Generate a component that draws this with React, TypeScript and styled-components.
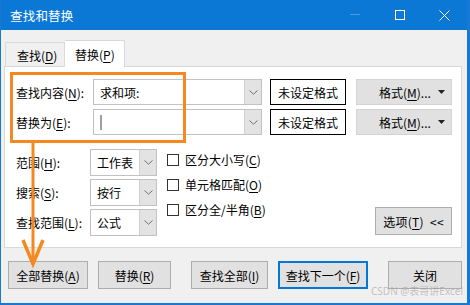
import React from "react";
import styled, { createGlobalStyle } from "styled-components";

const Global = createGlobalStyle`
  html, body { margin: 0; padding: 0; background: #fff; }
  body { font-family: "Noto Sans", "Noto Sans CJK SC", sans-serif; font-size: 12px; color: #000; }
  * { box-sizing: border-box; }
`;

const Window = styled.div`
  position: relative;
  width: 470px;
  height: 305px;
  background: #f0f0f0;
  border-left: 1px solid #1979d2;
  border-right: 3px solid #1979d2;
  border-bottom: 2px solid #1979d2;
  display: flex;
  flex-direction: column;
  overflow: hidden;
`;

const TitleBar = styled.div`
  height: 30px;
  flex: none;
  background: #0b78d6;
  color: #fff;
  display: flex;
  align-items: center;
  padding-left: 9px;
  font-family: "Noto Sans CJK SC", sans-serif;
  font-size: 12.5px;
`;

const Title = styled.div`
  flex: 1;
  letter-spacing: 0.2px;
`;

const Ctrl = styled.div`
  width: 45px;
  height: 30px;
  display: flex;
  align-items: center;
  justify-content: center;
`;

const Body = styled.div`
  flex: 1;
  display: flex;
  flex-direction: column;
  padding: 10px 5px 10px 3px;
`;

const TabRow = styled.div`
  display: flex;
  align-items: flex-end;
  margin-left: 1px;
  height: 27px;
  position: relative;
  z-index: 1;
  margin-bottom: -1px;
`;

const Tab = styled.div<{ $active?: boolean }>`
  width: 60px;
  height: ${(p) => (p.$active ? "27px" : "25px")};
  background: ${(p) => (p.$active ? "#fff" : "#f0f0f0")};
  border: 1px solid #d9d9d9;
  border-bottom: ${(p) => (p.$active ? "none" : "1px solid #d9d9d9")};
  border-left: ${(p) => (p.$active ? "none" : "1px solid #d9d9d9")};
  display: flex;
  align-items: center;
  padding-left: ${(p) => (p.$active ? "10px" : "11px")};
  padding-top: ${(p) => (p.$active ? "0" : "1px")};
  font-family: "Noto Sans CJK SC", sans-serif;
  font-size: 12px;
`;

const U = styled.span`
  text-decoration: underline;
  text-underline-offset: 2px;
`;

const Panel = styled.div`
  background: #fff;
  border: 1px solid #d9d9d9;
  padding: 12px 9px 12px 11px;
  display: flex;
  flex-direction: column;
  gap: 4px;
`;

const FieldRow = styled.div`
  display: flex;
  align-items: center;
  height: 26px;
`;

const Label = styled.div<{ $w: number }>`
  width: ${(p) => p.$w}px;
  flex: none;
  font-family: "Noto Sans CJK SC", sans-serif;
  font-size: 12px;
  white-space: nowrap;
`;

const Combo = styled.div<{ $w: number; $h?: number }>`
  width: ${(p) => p.$w}px;
  height: ${(p) => p.$h ?? 26}px;
  flex: none;
  border: 1px solid #c2c2c2;
  background: #fff;
  display: flex;
  align-items: stretch;
`;

const ComboText = styled.div`
  flex: 1;
  display: flex;
  align-items: center;
  padding-left: 6px;
  font-family: "Noto Sans CJK SC", sans-serif;
  font-size: 12px;
`;

const Caret = styled.div`
  width: 2px;
  height: 15px;
  background: #a0a0a0;
`;

const DropBtn = styled.div`
  width: 17px;
  flex: none;
  background: #e3e3e3;
  border-left: 1px solid #d0d0d0;
  display: flex;
  align-items: center;
  justify-content: center;
`;

const FormatBox = styled.div`
  width: 76px;
  height: 26px;
  margin-left: 8px;
  border: 1px solid #000;
  display: flex;
  align-items: center;
  justify-content: center;
  font-family: "Noto Sans CJK SC", sans-serif;
  font-size: 12px;
`;

const FormatBtn = styled.div`
  width: 96px;
  height: 26px;
  margin-left: 10px;
  background: #e1e1e1;
  border: 1px solid #d4d4d4;
  display: flex;
  align-items: center;
  padding-left: 22px;
  padding-right: 6px;
  font-family: "Noto Sans CJK SC", sans-serif;
  font-size: 12px;
`;

const FormatLabel = styled.span`
  flex: 1;
`;

const Options = styled.div`
  display: flex;
  margin-top: 10px;
`;

const LeftCol = styled.div`
  display: flex;
  flex-direction: column;
  gap: 4px;
`;

const CheckCol = styled.div`
  display: flex;
  flex-direction: column;
  margin-left: 10px;
  margin-top: -2px;
`;

const CheckRow = styled.div`
  height: 25px;
  display: flex;
  align-items: center;
  gap: 6px;
  font-family: "Noto Sans CJK SC", sans-serif;
  font-size: 12px;
`;

const Box = styled.div`
  width: 12px;
  height: 12px;
  border: 1px solid #333;
  background: #fff;
`;

const Spacer = styled.div`
  flex: 1;
`;

const Button = styled.div<{ $w: number; $focus?: boolean }>`
  width: ${(p) => p.$w}px;
  height: 28px;
  flex: none;
  background: #e1e1e1;
  border: ${(p) => (p.$focus ? "2px solid #0078d7" : "1px solid #adadad")};
  display: flex;
  align-items: center;
  justify-content: center;
  font-family: "Noto Sans CJK SC", sans-serif;
  font-size: 12px;
`;

const OptionsBtn = styled(Button)`
  align-self: flex-end;
  margin-bottom: 0;
  letter-spacing: 0.3px;
`;

const ButtonBar = styled.div`
  display: flex;
  gap: 20px;
  margin-top: 13px;
  margin-left: 4px;
`;

const Group = styled.div`
  display: flex;
  gap: 10px;
`;

const Annotation = styled.svg`
  position: absolute;
  left: 0;
  top: 0;
  pointer-events: none;
`;

const Watermark = styled.div`
  position: absolute;
  right: 4px;
  bottom: 5px;
  font-family: "Noto Sans", "Noto Sans CJK SC", sans-serif;
  font-size: 10px;
  color: rgba(150, 150, 150, 0.55);
`;

const Chevron = () => (
  <svg width="9" height="5" viewBox="0 0 9 5">
    <path d="M0.5 0.5 L4.5 4.2 L8.5 0.5" stroke="#707070" strokeWidth="1" fill="none" />
  </svg>
);

const DropCombo = ({ w, h, children }: { w: number; h?: number; children?: React.ReactNode }) => (
  <Combo $w={w} $h={h}>
    <ComboText>{children}</ComboText>
    <DropBtn>
      <Chevron />
    </DropBtn>
  </Combo>
);

const Format = () => (
  <FormatBtn>
    <FormatLabel>
      格式(<U>M</U>)...
    </FormatLabel>
    <svg width="7" height="4" viewBox="0 0 7 4">
      <path d="M0 0 L7 0 L3.5 4 Z" fill="#222" />
    </svg>
  </FormatBtn>
);

export default function App() {
  return (
    <>
      <Global />
      <Window>
        <TitleBar>
          <Title>查找和替换</Title>
          <Ctrl>
            <svg width="10" height="2" viewBox="0 0 10 2">
              <rect x="0" y="0" width="10" height="1" fill="#4d9be0" />
            </svg>
          </Ctrl>
          <Ctrl>
            <svg width="10" height="10" viewBox="0 0 10 10">
              <rect x="0.5" y="0.5" width="9" height="9" stroke="#fff" fill="none" />
            </svg>
          </Ctrl>
          <Ctrl>
            <svg width="11" height="11" viewBox="0 0 11 11">
              <path d="M0.5 0.5 L10.5 10.5 M10.5 0.5 L0.5 10.5" stroke="#fff" strokeWidth="1" />
            </svg>
          </Ctrl>
        </TitleBar>
        <Body>
          <TabRow>
            <Tab>
              查找(<U>D</U>)
            </Tab>
            <Tab $active>
              替换(<U>P</U>)
            </Tab>
          </TabRow>
          <Panel>
            <FieldRow>
              <Label $w={77}>
                查找内容(<U>N</U>):
              </Label>
              <DropCombo w={169}>求和项:</DropCombo>
              <FormatBox>未设定格式</FormatBox>
              <Format />
            </FieldRow>
            <FieldRow>
              <Label $w={77}>
                替换为(<U>E</U>):
              </Label>
              <DropCombo w={169}>
                <Caret />
              </DropCombo>
              <FormatBox>未设定格式</FormatBox>
              <Format />
            </FieldRow>
            <Options>
              <LeftCol>
                <FieldRow>
                  <Label $w={74}>
                    范围(<U>H</U>):
                  </Label>
                  <DropCombo w={67} h={27}>工作表</DropCombo>
                </FieldRow>
                <FieldRow>
                  <Label $w={74}>
                    搜索(<U>S</U>):
                  </Label>
                  <DropCombo w={67} h={27}>按行</DropCombo>
                </FieldRow>
                <FieldRow>
                  <Label $w={74}>
                    查找范围(<U>L</U>):
                  </Label>
                  <DropCombo w={67} h={27}>公式</DropCombo>
                </FieldRow>
              </LeftCol>
              <CheckCol>
                <CheckRow>
                  <Box />
                  <span>
                    区分大小写(<U>C</U>)
                  </span>
                </CheckRow>
                <CheckRow>
                  <Box />
                  <span>
                    单元格匹配(<U>O</U>)
                  </span>
                </CheckRow>
                <CheckRow>
                  <Box />
                  <span>
                    区分全/半角(<U>B</U>)
                  </span>
                </CheckRow>
              </CheckCol>
              <Spacer />
              <OptionsBtn $w={77}>
                选项(<U>T</U>)&nbsp;&nbsp;&lt;&lt;
              </OptionsBtn>
            </Options>
          </Panel>
          <ButtonBar>
            <Group>
              <Button $w={80}>
                全部替换(<U>A</U>)
              </Button>
              <Button $w={73}>
                替换(<U>R</U>)
              </Button>
            </Group>
            <Group>
              <Button $w={77}>
                查找全部(<U>I</U>)
              </Button>
              <Button $w={90} $focus>
                查找下一个(<U>F</U>)
              </Button>
            </Group>
            <Group>
              <Button $w={74}>关闭</Button>
            </Group>
          </ButtonBar>
        </Body>
        <Annotation width="470" height="305" viewBox="0 0 470 305">
          <rect x="10.5" y="73.5" width="173" height="68" fill="none" stroke="#f5891f" strokeWidth="3" />
          <path d="M32 143 L32 264" stroke="#f5891f" strokeWidth="3" fill="none" />
          <path d="M22 240 L32 264 L42 240" stroke="#f5891f" strokeWidth="3.5" fill="none" strokeLinejoin="miter" />
        </Annotation>
        <Watermark>CSDN @表哥讲Excel</Watermark>
      </Window>
    </>
  );
}
